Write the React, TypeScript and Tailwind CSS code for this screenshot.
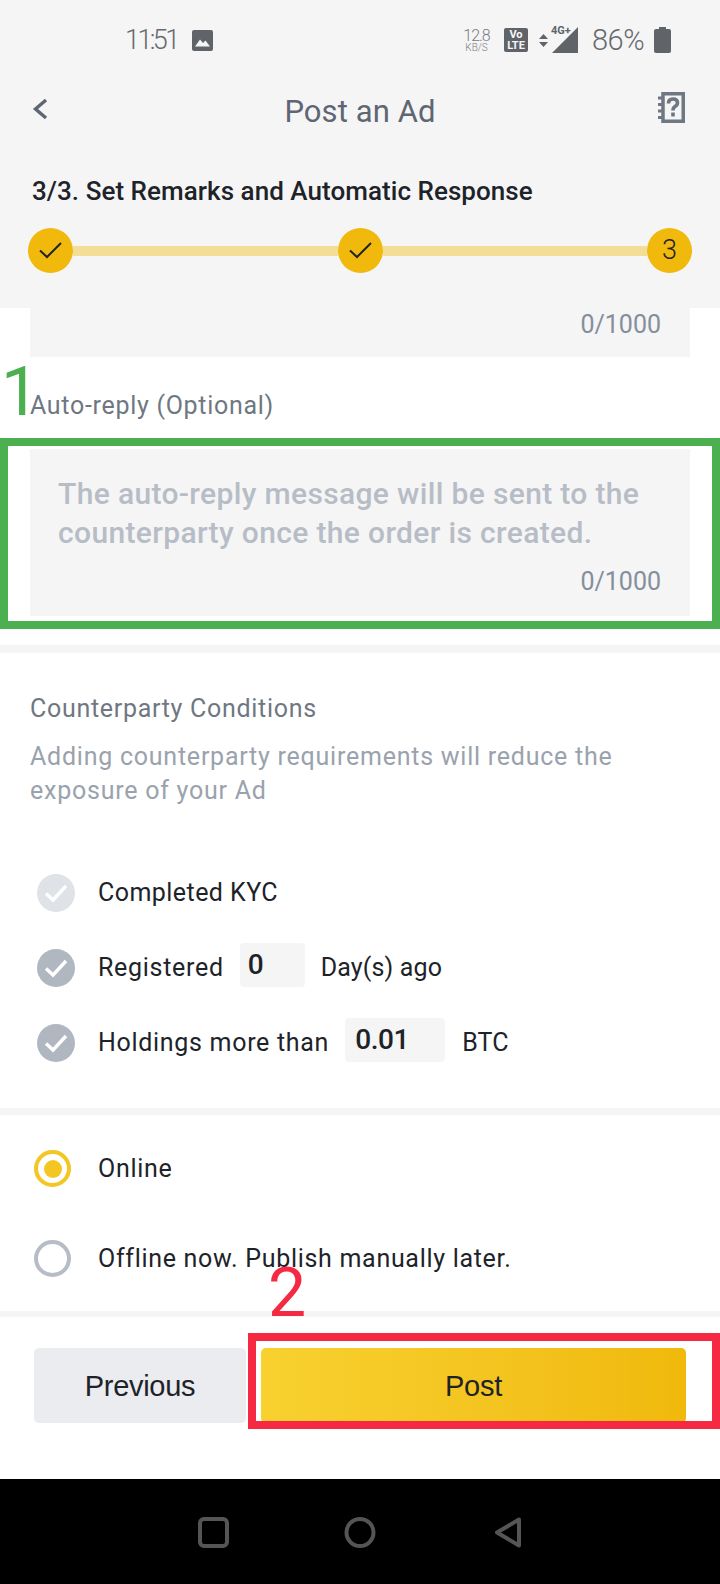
const din = { fontFamily: 'Roboto, sans-serif' }

function StepCheck() {
  return (
    <div className="w-[45px] h-[45px] rounded-full bg-[#f0b90b] flex items-center justify-center shrink-0">
      <svg width="23" height="17" viewBox="0 0 23 17" fill="none" stroke="#1e2329" strokeWidth="2">
        <path d="M1 8.5 L8 15 L22 1" />
      </svg>
    </div>
  )
}

function CondCheck({ light }: { light?: boolean }) {
  return (
    <div className={`w-[38px] h-[38px] rounded-full flex items-center justify-center shrink-0 ${light ? 'bg-[#dfe2e6]' : 'bg-[#b0b7c1]'}`}>
      <svg width="24" height="20" viewBox="0 0 24 20" fill="none" stroke="#ffffff" strokeWidth="3.4">
        <path d="M2 10.5 L9 17 L22 3" />
      </svg>
    </div>
  )
}

function NavIcons() {
  return (
    <div className="h-[105px] bg-black flex items-start shrink-0 pt-[38px] pl-[198px]">
      <svg width="32" height="31" viewBox="0 0 32 31" fill="none" stroke="#555555" strokeWidth="4">
        <rect x="2" y="2" width="27" height="27" rx="4" />
      </svg>
      <svg className="ml-[114px]" width="32" height="31" viewBox="0 0 32 31" fill="none" stroke="#555555" strokeWidth="4">
        <circle cx="16" cy="15.5" r="13.5" />
      </svg>
      <svg className="ml-[118px]" width="28" height="31" viewBox="0 0 28 31" fill="none" stroke="#555555" strokeWidth="4" strokeLinejoin="round">
        <path d="M25 2.5 L3 15.5 L25 28.5 Z" />
      </svg>
    </div>
  )
}

export default function App() {
  return (
    <div className="relative w-[720px] h-[1584px] overflow-hidden bg-white flex flex-col" style={din}>
      {/* Header */}
      <div className="bg-[#f5f5f5] h-[308px] shrink-0">
        <div className="h-[80px] flex items-center pl-[125px] text-[#666a6e]">
          <span className="w-[49px] text-[27px] font-light tracking-[-2.6px] leading-none whitespace-nowrap">11:51</span>
          <svg className="ml-[18px]" width="21" height="21" viewBox="0 0 21 21">
            <rect width="21" height="21" rx="2" fill="#606468" />
            <path d="M3 16.5 L8 9.5 L11 13 L13.5 10.5 L18 16.5 Z" fill="#f5f5f5" />
          </svg>
          <div className="ml-[250px] w-[27px] flex flex-col items-center text-[#777b7f] font-light">
            <span className="text-[16px] leading-[15px] tracking-[-1px]">12.8</span>
            <span className="text-[10px] leading-[10px]">KB/S</span>
          </div>
          <div className="ml-[14px] w-[24px] h-[24px] rounded-[2px] bg-[#606468] flex flex-col items-center justify-center text-[#f5f5f5] font-bold text-[11px] leading-[11px]">
            <span>Vo</span>
            <span>LTE</span>
          </div>
          <svg className="ml-[11px]" width="9" height="13" viewBox="0 0 9 13" fill="#606468">
            <path d="M4.5 0 L9 5 L0 5 Z M4.5 13 L0 8 L9 8 Z" />
          </svg>
          <div className="relative ml-[4px] w-[26px] h-[26px]">
            <svg width="26" height="26" viewBox="0 0 26 26" fill="#606468">
              <path d="M26 0 V26 H0 Z" />
            </svg>
            <span className="absolute left-[-1px] top-[-2px] text-[11px] leading-[11px] font-bold text-[#606468]">4G+</span>
          </div>
          <span className="ml-[14px] w-[53px] text-[29px] font-light leading-none text-[#666a6e] tracking-[-0.5px] whitespace-nowrap">86%</span>
          <svg className="ml-[9px]" width="17" height="26" viewBox="0 0 17 26" fill="#606468">
            <path d="M5 0 H12 V2 H15 Q17 2 17 4 V24 Q17 26 15 26 H2 Q0 26 0 24 V4 Q0 2 2 2 H5 Z" />
          </svg>
        </div>
        <div className="h-[60px] grid grid-cols-[1fr_auto_1fr] items-center pl-[32px] pr-[35px]">
          <svg className="mb-[3px]" width="16" height="22" viewBox="0 0 16 22" fill="none" stroke="#5e6673" strokeWidth="3.4">
            <path d="M14 2 L3.5 11 L14 20" />
          </svg>
          <span className="mt-[3px] ml-[3px] text-[31px] leading-[40px] text-[#5e6673] tracking-[0.1px]">Post an Ad</span>
          <svg className="justify-self-end mb-[5px]" width="28" height="31" viewBox="0 0 28 31" fill="none" stroke="#6f7782" strokeWidth="3.5">
            <path d="M6 1.75 H26.25 V29.25 H6 Z" />
            <path d="M1 6 H7 M1 12.5 H7 M1 19 H7 M1 25.5 H7" strokeWidth="3" />
            <path d="M11.5 11.5 Q11.5 7 16 7 Q20.5 7 20.5 10.8 Q20.5 13 18 14.5 Q16 15.7 16 18.5 M16 20.5 V24.5" strokeWidth="3.6" />
          </svg>
        </div>
        <div className="mt-[36px] pl-[32px] text-[26px] leading-[30px] font-medium text-[#1e2329] tracking-[0.05px]">
          3/3. Set Remarks and Automatic Response
        </div>
        <div className="mt-[22px] px-[28px] flex items-center">
          <StepCheck />
          <div className="flex-1 h-[10px] bg-[#f3dd97]" />
          <StepCheck />
          <div className="flex-1 h-[10px] bg-[#f3dd97]" />
          <div className="w-[45px] h-[45px] rounded-full bg-[#f0b90b] flex items-center justify-center shrink-0 text-[27px] font-light text-[#1e2329]">3</div>
        </div>
      </div>

      {/* Remarks and auto-reply */}
      <div className="mx-[30px] h-[49px] bg-[#f5f5f5] pt-[2px] pr-[29px] text-right text-[25px] leading-[30px] text-[#848e9c] shrink-0">0/1000</div>
      <div className="mt-[34px] ml-[30px] text-[25px] leading-[30px] text-[#6f7782] tracking-[0.7px] shrink-0">Auto-reply (Optional)</div>
      <div className="mt-[28px] mx-[30px] h-[167px] bg-[#f5f5f5] pt-[25px] pl-[28px] pr-[29px] shrink-0">
        <div className="text-[30px] leading-[39px] text-[#b7bdc6] font-medium tracking-[0.35px] whitespace-nowrap">
          The auto-reply message will be sent to the<br />counterparty once the order is created.
        </div>
        <div className="mt-[15px] text-right text-[25px] leading-[30px] text-[#848e9c]">0/1000</div>
      </div>
      <div className="mt-[29px] h-[8px] bg-[#f5f5f5] shrink-0" />

      {/* Counterparty conditions */}
      <div className="mt-[41px] ml-[30px] text-[25px] leading-[30px] text-[#6f7782] tracking-[0.7px] shrink-0">Counterparty Conditions</div>
      <div className="mt-[16px] ml-[30px] text-[25px] leading-[34px] text-[#9aa2ad] tracking-[0.76px] shrink-0">
        Adding counterparty requirements will reduce the<br />exposure of your Ad
      </div>
      <div className="mt-[66px] ml-[37px] flex flex-col gap-[37px] text-[25px] leading-[38px] text-[#1e2329] tracking-[0.7px] shrink-0">
        <div className="flex items-center h-[38px]">
          <CondCheck light />
          <span className="ml-[23px] tracking-[0.45px]">Completed KYC</span>
        </div>
        <div className="flex items-center h-[38px]">
          <CondCheck />
          <span className="ml-[23px]">Registered</span>
          <div className="ml-[16px] mb-[6px] w-[65px] h-[44px] rounded-[4px] bg-[#f5f5f5] pl-[8px] text-[28px] leading-[44px] font-medium">0</div>
          <span className="ml-[16px] tracking-[0.15px]">Day(s) ago</span>
        </div>
        <div className="flex items-center h-[38px]">
          <CondCheck />
          <span className="ml-[23px]">Holdings more than</span>
          <div className="ml-[16px] mb-[6px] w-[100px] h-[44px] rounded-[4px] bg-[#f5f5f5] pl-[10px] text-[28px] leading-[44px] font-medium tracking-[-0.4px]">0.01</div>
          <span className="ml-[17px] tracking-[0.2px]">BTC</span>
        </div>
      </div>
      <div className="mt-[46px] h-[7px] bg-[#f5f5f5] shrink-0" />

      {/* Publish state */}
      <div className="mt-[35px] ml-[34px] flex flex-col gap-[53px] text-[25px] text-[#1e2329] tracking-[0.7px] shrink-0">
        <div className="flex items-center h-[37px]">
          <div className="w-[37px] h-[37px] rounded-full border-[4px] border-[#f3c623] flex items-center justify-center shrink-0">
            <div className="w-[18px] h-[18px] rounded-full bg-[#f3c623]" />
          </div>
          <span className="ml-[27px]">Online</span>
        </div>
        <div className="flex items-center h-[37px]">
          <div className="w-[37px] h-[37px] rounded-full border-[4px] border-[#b7bdc6] shrink-0" />
          <span className="ml-[27px]">Offline now. Publish manually later.</span>
        </div>
      </div>
      <div className="mt-[34px] h-[6px] bg-[#f5f5f5] shrink-0" />

      {/* Actions */}
      <div className="mt-[31px] h-[75px] pl-[34px] flex gap-[15px] shrink-0" style={{ fontFamily: '"Liberation Sans", Arial, sans-serif' }}>
        <button className="w-[212px] rounded-[5px] bg-[#eaecef] pt-[2px] text-[29px] tracking-[-0.3px] text-[#1e2329]">Previous</button>
        <button className="w-[425px] rounded-[5px] bg-gradient-to-r from-[#f8d12f] to-[#f0b90b] pt-[2px] text-[29px] tracking-[-0.3px] text-[#1e2329]">Post</button>
      </div>
      <div className="flex-1" />
      <NavIcons />

      {/* Annotations drawn over the screenshot */}
      <div className="absolute left-0 top-[438px] w-[720px] h-[191px] border-[8px] border-[#4caf50]" />
      <div className="absolute left-[248px] top-[1333px] w-[472px] h-[96px] border-[8px] border-[#f52a42]" />
      <span className="absolute left-[1px] top-[352px] text-[68px] leading-[80px] text-[#4caf50]">1</span>
      <span className="absolute left-[268px] top-[1253px] text-[68px] leading-[80px] text-[#f52a42]">2</span>
    </div>
  )
}
